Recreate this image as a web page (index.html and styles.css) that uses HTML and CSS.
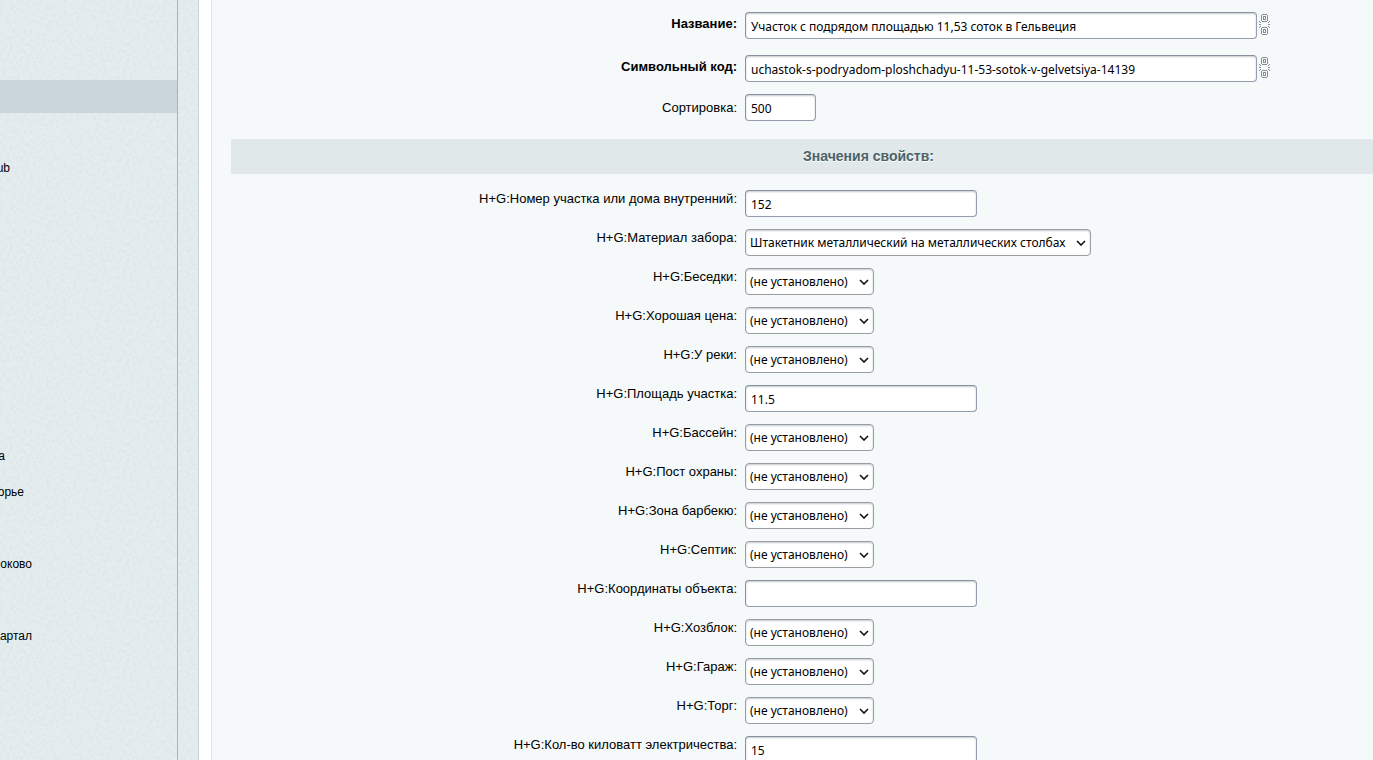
FILE: index.html
```html
<!DOCTYPE html>
<html lang="ru">
<head>
<meta charset="utf-8">
<title>Участок</title>
<link rel="stylesheet" href="styles.css">
</head>
<body>
<svg class="sprite" aria-hidden="true">
  <symbol id="chain" viewBox="0 0 11 22">
    <g fill="none" stroke="#8b8d8f" shape-rendering="crispEdges">
      <path d="M3 .5h5M3 7.5h5M2.5 1v6M8.5 1v6M4.5 2v4M6.5 2v4M5 2.5h1M5 5.5h1"/>
      <path d="M3 13.5h5M3 20.5h5M2.5 14v6M8.5 14v6M4.5 15v4M6.5 15v4M5 15.5h1M5 18.5h1"/>
      <path d="M0 7.5h1M1 8.5h1M0 10.5h2M1 12.5h1M0 13.5h1M10 7.5h1M9 8.5h1M9 10.5h2M9 12.5h1M10 13.5h1"/>
    </g>
  </symbol>
</svg>
<div class="page">
  <aside class="sidebar">
    <nav class="menu">
      <div class="current"></div>
      <ul class="items">
        <li class="end-10">ub</li><li></li><li></li><li></li><li></li><li></li><li></li><li></li>
        <li class="end-5">а</li><li class="end-24">орье</li><li></li>
        <li class="end-32">оково</li><li></li><li class="end-32">артал</li>
      </ul>
    </nav>
  </aside>
  <main class="content">
    <form class="form">
      <div class="row roomy"><label class="bold" for="f1">Название:</label><div class="field"><input id="f1" class="long" value="Участок с подрядом площадью 11,53 соток в Гельвеция"><button type="button" class="link" aria-label="Связь"><svg><use href="#chain"/></svg></button></div></div>
      <div class="row second"><label class="bold" for="f2">Символьный код:</label><div class="field"><input id="f2" class="long" value="uchastok-s-podryadom-ploshchadyu-11-53-sotok-v-gelvetsiya-14139"><button type="button" class="link" aria-label="Связь"><svg><use href="#chain"/></svg></button></div></div>
      <div class="row third"><label for="f3">Сортировка:</label><div class="field"><input id="f3" class="short" value="500"></div></div>
      <h2 class="heading">Значения свойств:</h2>
      <div class="row"><label for="p1">H+G:Номер участка или дома внутренний:</label><div class="field"><input id="p1" value="152"></div></div>
      <div class="row"><label for="p2">H+G:Материал забора:</label><div class="field"><select id="p2" class="wide"><option>Штакетник металлический на металлических столбах</option></select></div></div>
      <div class="row"><label for="p3">H+G:Беседки:</label><div class="field"><select id="p3"><option>(не установлено)</option></select></div></div>
      <div class="row"><label for="p4">H+G:Хорошая цена:</label><div class="field"><select id="p4"><option>(не установлено)</option></select></div></div>
      <div class="row"><label for="p5">H+G:У реки:</label><div class="field"><select id="p5"><option>(не установлено)</option></select></div></div>
      <div class="row"><label for="p6">H+G:Площадь участка:</label><div class="field"><input id="p6" value="11.5"></div></div>
      <div class="row"><label for="p7">H+G:Бассейн:</label><div class="field"><select id="p7"><option>(не установлено)</option></select></div></div>
      <div class="row"><label for="p8">H+G:Пост охраны:</label><div class="field"><select id="p8"><option>(не установлено)</option></select></div></div>
      <div class="row"><label for="p9">H+G:Зона барбекю:</label><div class="field"><select id="p9"><option>(не установлено)</option></select></div></div>
      <div class="row"><label for="p10">H+G:Септик:</label><div class="field"><select id="p10"><option>(не установлено)</option></select></div></div>
      <div class="row"><label for="p11">H+G:Координаты объекта:</label><div class="field"><input id="p11" value=""></div></div>
      <div class="row"><label for="p12">H+G:Хозблок:</label><div class="field"><select id="p12"><option>(не установлено)</option></select></div></div>
      <div class="row"><label for="p13">H+G:Гараж:</label><div class="field"><select id="p13"><option>(не установлено)</option></select></div></div>
      <div class="row"><label for="p14">H+G:Торг:</label><div class="field"><select id="p14"><option>(не установлено)</option></select></div></div>
      <div class="row"><label for="p15">H+G:Кол-во киловатт электричества:</label><div class="field"><input id="p15" value="15"></div></div>
    </form>
  </main>
</div>
</body>
</html>
```

FILE: styles.css
```css
* { box-sizing: border-box; }
body {
  margin: 0;
  height: 100vh;
  overflow: hidden;
  background: #fff;
  color: #000;
  font: 13px/18px "Liberation Sans", Arial, sans-serif;
}
.sprite { display: none; }
.page { display: flex; height: 100%; }

.sidebar {
  flex: none;
  width: 199px;
  padding-right: 20px;
  border-right: 1px solid #c8d5dc;
  background: #e5edef url("data:image/svg+xml,%3Csvg xmlns='http://www.w3.org/2000/svg' width='100' height='100'%3E%3Cfilter id='n' x='0' y='0' width='100%25' height='100%25' color-interpolation-filters='sRGB'%3E%3CfeTurbulence type='fractalNoise' baseFrequency='.3' numOctaves='2' stitchTiles='stitch'/%3E%3CfeColorMatrix values='0 0 0 0 .75 0 0 0 0 .82 0 0 0 0 .83 .5 0 0 0 -.18'/%3E%3C/filter%3E%3Crect width='100' height='100' filter='url(%23n)'/%3E%3C/svg%3E");
}
.menu { height: 100%; padding-top: 80px; border-right: 1px solid #a3b5c9; }
.current { height: 33px; background: #cbd6dc; }
.items {
  margin: 0;
  padding: 37px 0 0;
  list-style: none;
  font-size: 12px;
}
.items li {
  display: flex;
  justify-content: flex-end;
  align-items: center;
  height: 36px;
}
.end-5 { width: 5px; }
.end-10 { width: 10px; }
.end-24 { width: 24px; }
.end-32 { width: 32px; }

.content {
  flex: 1;
  min-width: 0;
  margin-left: 12px;
  padding: 6px 0 0 19px;
  border-left: 1px solid #dce6ea;
  background: #f5f9f9;
  overflow: hidden;
}
/* the form runs past the right edge of the window */
.form { width: calc(100% + 133px); }
.row {
  display: grid;
  grid-template-columns: 2fr 3fr;
  padding: 6px 0;
}
.row label { padding-right: 4px; text-align: right; }
.roomy { padding-bottom: 10px; }
.roomy label, .second label { padding-top: 3px; }
.third label { padding-top: 5px; }
.bold { font-weight: bold; }
.field { display: flex; align-items: flex-start; padding-left: 4px; }
.heading {
  margin: 12px 0 10px;
  background: #e0e8ea;
  color: #4b6267;
  font-size: 14px;
  line-height: 35px;
  text-align: center;
  text-shadow: 0 1px #fff;
}

input, select {
  height: 27px;
  margin: 0;
  border: 1px solid #9a9da1;
  border-radius: 4px;
  background-color: #fff;
  box-shadow: inset 0 1px 2px #c5cbd0;
  color: #000;
  font: 12px "Noto Sans", "Open Sans", sans-serif;
}
input { width: 232px; padding: 2px 5px 0; border-color: #87919f #959db0 #959db0 #87919f; }
.long { width: 512px; }
.short { width: 71px; }
select {
  width: 129px;
  padding: 0 4px;
  appearance: none;
  background-image: url("data:image/svg+xml,%3Csvg xmlns='http://www.w3.org/2000/svg' width='10' height='6'%3E%3Cpath d='M1 1l4 4 4-4' fill='none' stroke='%23111' stroke-width='1.6'/%3E%3C/svg%3E");
  background-repeat: no-repeat;
  background-position: right 4px center;
}
.wide { width: 346px; }
.link {
  display: block;
  margin: 2px 0 0 2px;
  padding: 0;
  border: 0;
  background: none;
}
.link svg { display: block; width: 11px; height: 22px; }
```
